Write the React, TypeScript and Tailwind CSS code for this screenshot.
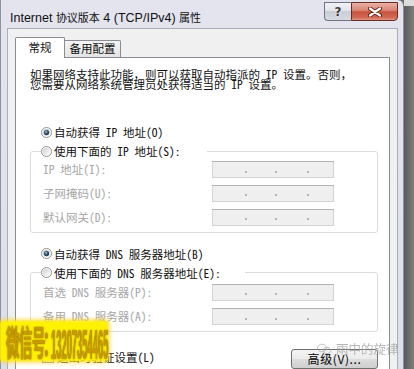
import React from "react";

const CJK = "font-['Noto_Sans_Mono_CJK_SC','Noto_Sans_CJK_SC',sans-serif]";

function Radio({ checked, id }: { checked?: boolean; id: string }) {
  return (
    <svg width="11" height="11" viewBox="0 0 13 13" className="shrink-0">
      <defs>
        <linearGradient id={id + "o"} x1="0" y1="0" x2="1" y2="1">
          <stop offset="0" stopColor="#cfcfcf" />
          <stop offset="1" stopColor="#ffffff" />
        </linearGradient>
        <radialGradient id={id + "d"} cx="0.4" cy="0.35" r="0.7">
          <stop offset="0" stopColor="#a9c4d8" />
          <stop offset="0.45" stopColor="#3f5f78" />
          <stop offset="1" stopColor="#1c2f40" />
        </radialGradient>
      </defs>
      <circle cx="6.5" cy="6.5" r="6" fill="#f6f6f6" stroke="#8a8a8a" strokeWidth="1" />
      <circle cx="6.5" cy="6.5" r="4.5" fill={`url(#${id}o)`} />
      {checked && <circle cx="6.5" cy="6.5" r="3.2" fill={`url(#${id}d)`} />}
    </svg>
  );
}

function IpBox() {
  return (
    <div className="flex h-[17px] w-[122px] items-center border border-[#d3d3d3] border-t-[#b3b3b3] bg-[#efefef]">
      <span className="ml-[32px] mt-[4px] h-[2px] w-[2px] rounded-full bg-[#a0a0a0]" />
      <span className="ml-[28px] mt-[4px] h-[2px] w-[2px] rounded-full bg-[#a0a0a0]" />
      <span className="ml-[30px] mt-[4px] h-[2px] w-[2px] rounded-full bg-[#a0a0a0]" />
    </div>
  );
}

export default function App() {
  return (
    <div className={`relative flex h-[369px] w-[414px] overflow-hidden bg-[#6a6a6a] ${CJK} text-[11.5px] text-[#111]`}>
      {/* window */}
      <div className="flex w-[404px] flex-col rounded-tr-[6px] border-x border-x-[#8c929c] bg-gradient-to-b from-[#e4e4ee] to-[#dcdfe8] pl-[6px] pr-[5px]">
        {/* title bar */}
        <div className="flex h-[28px] shrink-0 items-start">
          <div className="pl-[3px] pt-[9px] font-['Liberation_Sans','Noto_Sans_CJK_SC',sans-serif] text-[12.5px] leading-[16px] text-[#101010]">
            Internet <span className="font-['Noto_Sans_CJK_SC',sans-serif] text-[11px]">协议版本</span> 4 (TCP/IPv4){" "}
            <span className="font-['Noto_Sans_CJK_SC',sans-serif] text-[11px]">属性</span>
          </div>
          <div className="ml-auto mt-[2px] flex">
            <div className="flex h-[19px] w-[27px] items-center justify-center rounded-bl-[4px] border border-r-0 border-[#6f7480] bg-[linear-gradient(to_bottom,#f1f2f6_0%,#e1e4ea_45%,#c9cdd6_50%,#d6dae2_100%)] font-['DejaVu_Sans',sans-serif] text-[12px] font-bold leading-none text-[#3a3a3a] [text-shadow:0_0_2px_#fff]">
              ?
            </div>
            <div className="flex h-[19px] w-[47px] items-center justify-center rounded-br-[4px] border border-[#6b2a20] bg-[linear-gradient(to_bottom,#eab2a6_0%,#d98272_45%,#c9503c_52%,#d16a55_85%,#e4978a_100%)]">
              <svg width="14" height="10" viewBox="0 0 14 10">
                <path d="M2 1.5 L12 8.5 M12 1.5 L2 8.5" stroke="#5a1d14" strokeWidth="4" strokeLinecap="round" />
                <path d="M2 1.5 L12 8.5 M12 1.5 L2 8.5" stroke="#ffffff" strokeWidth="2.2" strokeLinecap="round" />
              </svg>
            </div>
          </div>
        </div>

        {/* body */}
        <div className="flex flex-1 flex-col border border-[#a7aeb9] bg-[#f0f0f0] pl-[7px] pr-[7px] pt-[8px]">
          {/* tabs */}
          <div className="flex h-[20px] items-end">
            <div className="relative z-10 -mb-px flex h-[21px] w-[50px] items-center justify-center rounded-t-[2px] border border-b-0 border-[#898c95] bg-white">
              常规
            </div>
            <div className="flex h-[17px] w-[56px] items-center justify-center rounded-tr-[2px] border-r border-t border-[#898c95] bg-gradient-to-b from-[#f3f3f3] to-[#e4e4e4]">
              备用配置
            </div>
          </div>

          {/* tab panel */}
          <div className="flex flex-1 flex-col border border-[#898c95] bg-white">
            <div className="ml-[14px] mt-[10.5px] leading-[10.5px]">
              <div>如果网络支持此功能，则可以获取自动指派的 IP 设置。否则，</div>
              <div>您需要从网络系统管理员处获得适当的 IP 设置。</div>
            </div>

            <div className="ml-[25px] mt-[34.5px] flex h-[16px] items-center gap-[2px] leading-[16px]">
              <Radio id="ra" checked />
              <span>自动获得 IP 地址(O)</span>
            </div>

            <fieldset className="ml-[14px] mt-[3px] w-[348px] rounded-[3px] border border-[#dcdcdc] px-[12px] pb-[6px] pt-[2px]">
              <legend className="-ml-[2px] flex h-[16px] w-[166px] items-center gap-[2px] leading-[16px]">
                <Radio id="rb" />
                <span>使用下面的 IP 地址(S):</span>
              </legend>
              <div className="grid grid-cols-[169px_122px] items-center gap-y-[6.5px] text-[#a6a6a6]">
                <span>IP 地址(I):</span>
                <IpBox />
                <span>子网掩码(U):</span>
                <IpBox />
                <span>默认网关(D):</span>
                <IpBox />
              </div>
            </fieldset>

            <div className="ml-[25px] mt-[13px] flex h-[16px] items-center gap-[2px] leading-[16px]">
              <Radio id="rc" checked />
              <span>自动获得 DNS 服务器地址(B)</span>
            </div>

            <fieldset className="ml-[14px] mt-[3px] w-[348px] rounded-[3px] border border-[#dcdcdc] px-[12px] pb-[6px] pt-[3px]">
              <legend className="-ml-[2px] flex h-[16px] w-[204px] items-center gap-[2px] leading-[16px]">
                <Radio id="rd" />
                <span>使用下面的 DNS 服务器地址(E):</span>
              </legend>
              <div className="grid grid-cols-[169px_122px] items-center gap-y-[7px] text-[#a6a6a6]">
                <span>首选 DNS 服务器(P):</span>
                <IpBox />
                <span>备用 DNS 服务器(A):</span>
                <IpBox />
              </div>
            </fieldset>

            <div className="ml-[14px] mt-[17px] flex w-[348px] items-start justify-between">
              <div className="flex h-[16px] items-center gap-[3px] pl-[12px] leading-[16px]">
                <span className="h-[12px] w-[12px] border border-[#8f8f8f] bg-gradient-to-br from-[#dcdcdc] to-white" />
                <span>退出时验证设置(L)</span>
              </div>
              <div className="flex h-[20px] w-[87px] items-center justify-center rounded-[3px] border border-[#707070] bg-[linear-gradient(to_bottom,#f4f4f4_0%,#ebebeb_48%,#dddddd_52%,#cfcfcf_100%)] font-['Noto_Sans_CJK_SC',sans-serif] text-[12px] tracking-[0.6px] text-black">
                高级(V)...
              </div>
            </div>
          </div>
        </div>
      </div>

      {/* right shadow */}
      <div className="flex w-[10px] flex-col">
        <div className="h-[6px] bg-[#dcdcdc]" />
        <div className="flex-1 bg-gradient-to-r from-[#5a5a5a] to-[#7e7e7e]" />
      </div>

      {/* watermark: 雨中的旋律 */}
      <div className="absolute left-[316px] top-[342px] flex items-center gap-[3px] opacity-70">
        <svg width="17" height="12" viewBox="0 0 17 12">
          <ellipse cx="6" cy="5" rx="4.5" ry="3.8" fill="none" stroke="#a8a8a8" strokeWidth="1" />
          <ellipse cx="11" cy="7.5" rx="3.8" ry="3.2" fill="none" stroke="#a8a8a8" strokeWidth="1" />
        </svg>
        <span className="font-['Noto_Sans_CJK_SC',sans-serif] text-[12.5px] leading-[14px] text-[#9a9a9a]">雨中的旋律</span>
      </div>

      {/* watermark: yellow */}
      <div className="absolute left-[0px] top-[321px] h-[40px] w-[108px] rounded-[3px] bg-[#fff200] shadow-[0_0_4px_1px_#ffcf20] blur-[1px]" />
      <div className="absolute left-[6px] top-[322px] h-[14px] origin-top-left scale-y-[2.6] font-['Noto_Sans_CJK_SC',sans-serif] text-[13.5px] font-bold leading-[14px] tracking-[-0.5px] text-[#c99a00] [text-shadow:0_0_1px_#6e5200]">
        微信号<span className="-ml-[2px] tracking-[-8px]">：</span>
      </div>
      <div className="absolute left-[51px] top-[323px] h-[14px] origin-top-left scale-x-[0.67] scale-y-[3] font-['Liberation_Sans',sans-serif] text-[14px] font-bold leading-[14px] text-[#c99a00] [text-shadow:0_0_1px_#6e5200]">
        13207354465
      </div>
    </div>
  );
}
